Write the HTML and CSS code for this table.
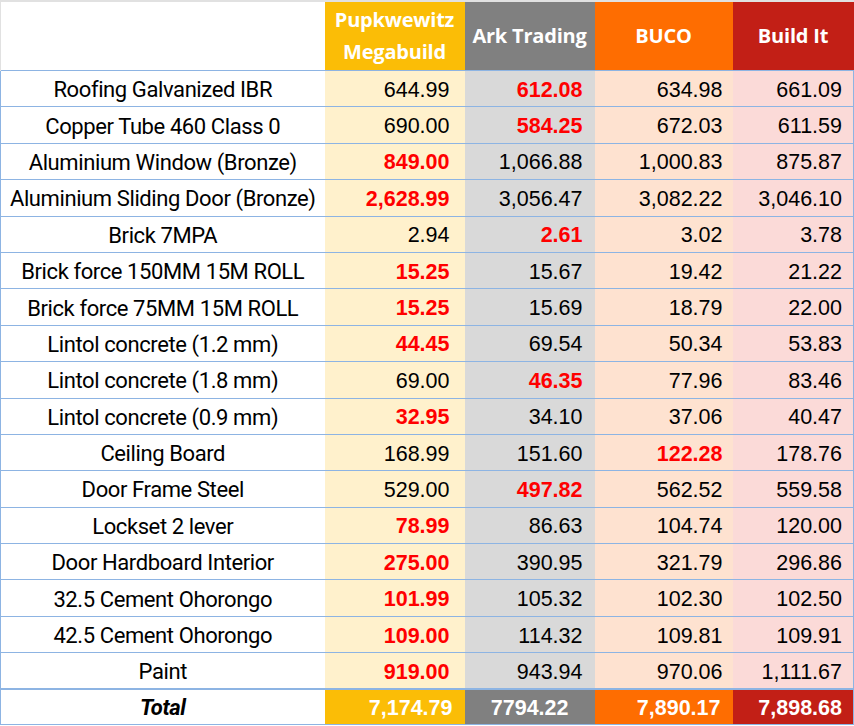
FILE: index.html
```html
<!DOCTYPE html>
<html>
<head>
<meta charset="utf-8">
<link rel="stylesheet" href="styles.css">
</head>
<body>
<div class="sheet">
<table class="prices">
<colgroup>
<col class="c-name"><col class="c-pup"><col class="c-ark"><col class="c-buco"><col class="c-bi">
</colgroup>
<thead>
<tr>
<th class="blank"></th>
<th class="h-pup">Pupkwewitz<br>Megabuild</th>
<th class="h-ark">Ark Trading</th>
<th class="h-buco">BUCO</th>
<th class="h-bi">Build It</th>
</tr>
</thead>
<tbody>
<tr><td class="name">Roofing Galvanized IBR</td><td class="pup">644.99</td><td class="ark best">612.08</td><td class="buco">634.98</td><td class="bi">661.09</td></tr>
<tr><td class="name">Copper Tube 460 Class 0</td><td class="pup">690.00</td><td class="ark best">584.25</td><td class="buco">672.03</td><td class="bi">611.59</td></tr>
<tr><td class="name">Aluminium Window (Bronze)</td><td class="pup best">849.00</td><td class="ark">1,066.88</td><td class="buco">1,000.83</td><td class="bi">875.87</td></tr>
<tr><td class="name">Aluminium Sliding Door (Bronze)</td><td class="pup best">2,628.99</td><td class="ark">3,056.47</td><td class="buco">3,082.22</td><td class="bi">3,046.10</td></tr>
<tr><td class="name">Brick 7MPA</td><td class="pup">2.94</td><td class="ark best">2.61</td><td class="buco">3.02</td><td class="bi">3.78</td></tr>
<tr><td class="name">Brick force 150MM 15M ROLL</td><td class="pup best">15.25</td><td class="ark">15.67</td><td class="buco">19.42</td><td class="bi">21.22</td></tr>
<tr><td class="name">Brick force 75MM 15M ROLL</td><td class="pup best">15.25</td><td class="ark">15.69</td><td class="buco">18.79</td><td class="bi">22.00</td></tr>
<tr><td class="name">Lintol concrete (1.2 mm)</td><td class="pup best">44.45</td><td class="ark">69.54</td><td class="buco">50.34</td><td class="bi">53.83</td></tr>
<tr><td class="name">Lintol concrete (1.8 mm)</td><td class="pup">69.00</td><td class="ark best">46.35</td><td class="buco">77.96</td><td class="bi">83.46</td></tr>
<tr><td class="name">Lintol concrete (0.9 mm)</td><td class="pup best">32.95</td><td class="ark">34.10</td><td class="buco">37.06</td><td class="bi">40.47</td></tr>
<tr><td class="name">Ceiling Board</td><td class="pup">168.99</td><td class="ark">151.60</td><td class="buco best">122.28</td><td class="bi">178.76</td></tr>
<tr><td class="name">Door Frame Steel</td><td class="pup">529.00</td><td class="ark best">497.82</td><td class="buco">562.52</td><td class="bi">559.58</td></tr>
<tr><td class="name">Lockset 2 lever</td><td class="pup best">78.99</td><td class="ark">86.63</td><td class="buco">104.74</td><td class="bi">120.00</td></tr>
<tr><td class="name">Door Hardboard Interior</td><td class="pup best">275.00</td><td class="ark">390.95</td><td class="buco">321.79</td><td class="bi">296.86</td></tr>
<tr><td class="name">32.5 Cement Ohorongo</td><td class="pup best">101.99</td><td class="ark">105.32</td><td class="buco">102.30</td><td class="bi">102.50</td></tr>
<tr><td class="name">42.5 Cement Ohorongo</td><td class="pup best">109.00</td><td class="ark">114.32</td><td class="buco">109.81</td><td class="bi">109.91</td></tr>
<tr><td class="name">Paint</td><td class="pup best">919.00</td><td class="ark">943.94</td><td class="buco">970.06</td><td class="bi">1,111.67</td></tr>
</tbody>
<tfoot>
<tr><td class="name total-label">Total</td><td class="t-pup">7,174.79</td><td class="t-ark">7794.22</td><td class="t-buco">7,890.17</td><td class="t-bi">7,898.68</td></tr>
</tfoot>
</table>
</div>
</body>
</html>
```

FILE: styles.css
```css
html, body {
  margin: 0;
  padding: 0;
  background: #ffffff;
}

.sheet {
  width: 854px;
  border-top: 2px solid #e1e1e1;
}

.prices {
  border-collapse: collapse;
  border-spacing: 0;
  table-layout: fixed;
  width: 853px;
  font-family: "Liberation Sans", Arial, sans-serif;
  font-size: 21.5px;
  color: #000;
}

.c-name { width: 324px; }
.c-pup { width: 140px; }
.c-ark { width: 130px; }
.c-buco { width: 138px; }
.c-bi { width: 121px; }

.prices th {
  height: 68px;
  padding: 0;
  font-family: "Open Sans", sans-serif;
  font-weight: 700;
  font-size: 20px;
  line-height: 32px;
  color: #ffffff;
  text-align: center;
  letter-spacing: -0.2px;
}

.prices thead tr {
  border-bottom: 1px solid #8db4e3;
}

.blank {
  background: #ffffff;
  border-left: 1px solid #e1e1e1;
}
.h-pup { background: #fbbd06; }
.h-ark { background: #808080; }
.h-buco { background: #fe6d01; }
.h-bi { background: #c21f16; }

.prices tbody tr {
  height: 36.4px;
  border-bottom: 1px solid #8db4e3;
}

.prices td {
  padding: 3px 12px 0 0;
  text-align: right;
  white-space: nowrap;
  vertical-align: middle;
}

.prices td.name {
  padding: 2px 0 0 0;
  text-align: center;
  font-family: "Roboto", sans-serif;
  font-size: 22px;
  letter-spacing: -0.4px;
  border-left: 1px solid #8db4e3;
}

.prices td:last-child {
  border-right: 1px solid #8db4e3;
}

.pup { background: #fff1cc; padding-right: 15px !important; }
.ark { background: #d9d9d9; }
.buco { background: #fee2d0; padding-right: 10px !important; }
.bi { background: #fbdad8; padding-right: 11px !important; }

.best {
  color: #ff0000;
  font-weight: 700;
}

.prices tfoot tr {
  height: 35px;
  border-top: 2px solid #8db4e3;
  border-bottom: 1px solid #8db4e3;
}

.prices tfoot td {
  color: #ffffff;
  font-weight: 700;
}

.prices tfoot td.total-label {
  color: #000000;
  font-style: italic;
  font-weight: 700;
  background: #ffffff;
}

.t-pup { background: #fbbd06; padding-right: 12px !important; }
.t-ark { background: #808080; padding-right: 26px !important; }
.t-buco { background: #fe6d01; padding-right: 12px !important; }
.t-bi { background: #c21f16; padding-right: 11px !important; }
```
